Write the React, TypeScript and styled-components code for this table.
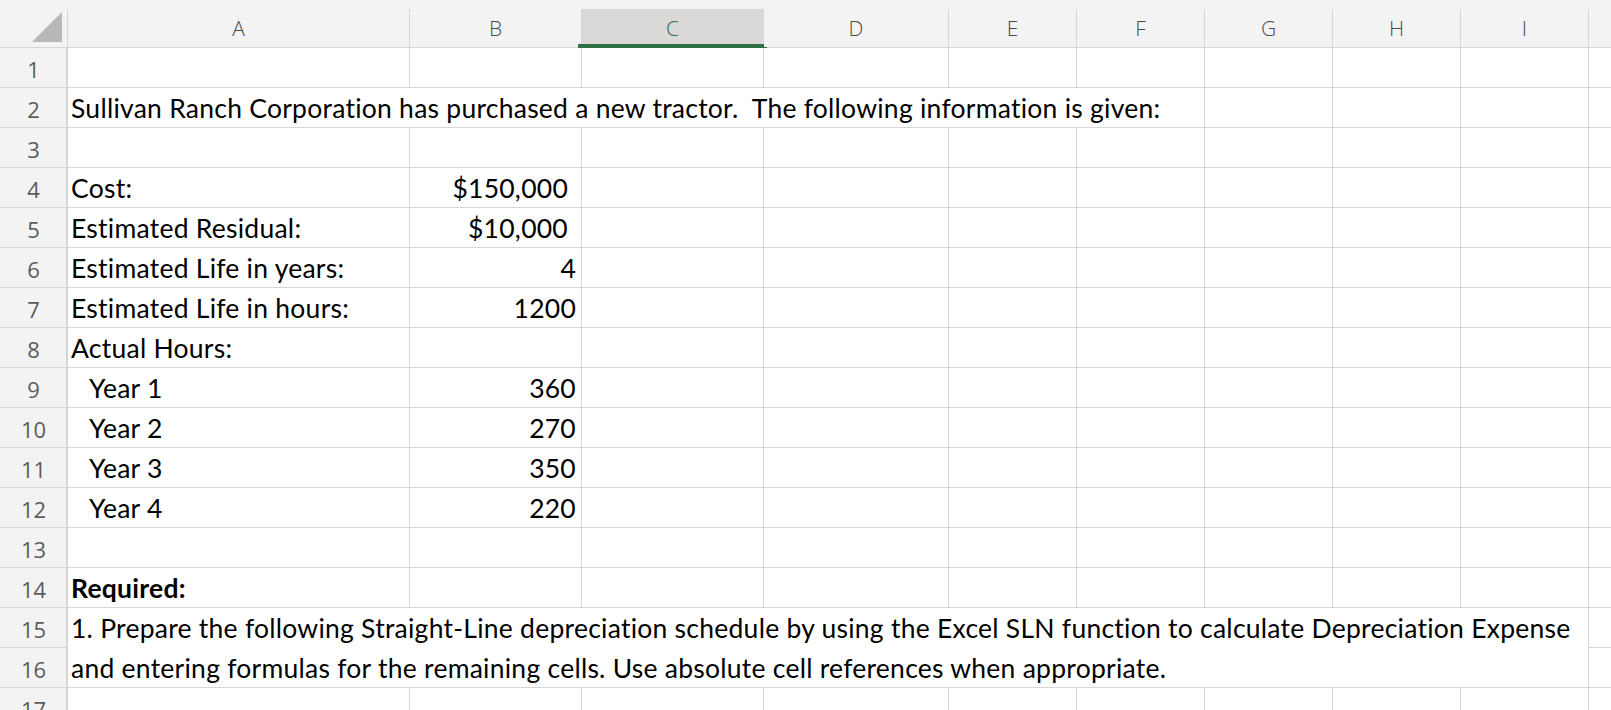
import styled, { createGlobalStyle, css } from 'styled-components'

const TRACKS = '67px 341px 171px 181px 184px 127px 127px 127px 127px 127px 1fr'
const LINE = '#d6d6d6'
const HEAD_BG = '#f3f3f3'
const LETTERS = ['A', 'B', 'C', 'D', 'E', 'F', 'G', 'H', 'I', '']
const SELECTED_COL = 'C'

type CellData = {
  text?: string
  lines?: string[]
  span?: number
  rowSpan?: number
  align?: 'left' | 'right'
  indent?: boolean
  bold?: boolean
  currency?: boolean
}

const label = (text: string, extra: Partial<CellData> = {}): CellData => ({ text, ...extra })
const num = (text: string, currency = false): CellData => ({ text, align: 'right', currency })

const rows: { n: number; cells: CellData[] }[] = [
  { n: 1, cells: [] },
  {
    n: 2,
    cells: [
      label('Sullivan Ranch Corporation has purchased a new tractor.  The following information is given:', {
        span: 6,
      }),
    ],
  },
  { n: 3, cells: [] },
  { n: 4, cells: [label('Cost:'), num('$150,000', true)] },
  { n: 5, cells: [label('Estimated Residual:'), num('$10,000', true)] },
  { n: 6, cells: [label('Estimated Life in years:'), num('4')] },
  { n: 7, cells: [label('Estimated Life in hours:'), num('1200')] },
  { n: 8, cells: [label('Actual Hours:')] },
  { n: 9, cells: [label('Year 1', { indent: true }), num('360')] },
  { n: 10, cells: [label('Year 2', { indent: true }), num('270')] },
  { n: 11, cells: [label('Year 3', { indent: true }), num('350')] },
  { n: 12, cells: [label('Year 4', { indent: true }), num('220')] },
  { n: 13, cells: [] },
  { n: 14, cells: [label('Required:', { bold: true })] },
  {
    n: 15,
    cells: [
      {
        lines: [
          '1. Prepare the following Straight-Line depreciation schedule by using the Excel SLN function to calculate Depreciation Expense',
          'and entering formulas for the remaining cells. Use absolute cell references when appropriate.',
        ],
        span: 9,
        rowSpan: 2,
      },
    ],
  },
  // row 16 is covered by the merged cell above, only column J is left
  { n: 16, cells: [] },
  { n: 17, cells: [] },
]

const GlobalStyle = createGlobalStyle`
  html, body {
    margin: 0;
    padding: 0;
    background: #fff;
    overflow: hidden;
  }
`

const Sheet = styled.div`
  width: 1611px;
  height: 710px;
  overflow: hidden;
  background: #fff;
  display: flex;
  flex-direction: column;
`

const HeaderRow = styled.div`
  flex-shrink: 0;
  display: grid;
  grid-template-columns: ${TRACKS};
  column-gap: 1px;
  height: 48px;
  box-sizing: border-box;
  border-bottom: 1px solid ${LINE};
  background: linear-gradient(to bottom, ${HEAD_BG} 9px, ${LINE} 9px);
`

const Corner = styled.div`
  background: ${HEAD_BG};
  display: flex;
  align-items: flex-end;
  justify-content: flex-end;
  padding: 0 5px 5px 0;
`

const Triangle = styled.div`
  width: 30px;
  height: 30px;
  background: #b8b8b8;
  clip-path: polygon(100% 0, 100% 100%, 0 100%);
`

const ColHeader = styled.div<{ $selected?: boolean }>`
  position: relative;
  background: ${HEAD_BG};
  font-family: 'Open Sans', sans-serif;
  font-weight: 300;
  font-size: 21px;
  color: #4a4a4a;
  display: flex;
  justify-content: center;
  align-items: center;
  padding-top: 9px;

  ${(p) =>
    p.$selected &&
    css`
      color: #2b6e45;
      background: linear-gradient(to bottom, ${HEAD_BG} 9px, #dad9d8 9px);

      &::after {
        content: '';
        position: absolute;
        left: -4px;
        right: -4px;
        bottom: -1px;
        height: 4px;
        background: #2e7044;
      }
    `}
`

const Body = styled.div`
  display: grid;
  grid-template-columns: ${TRACKS};
  grid-auto-rows: 39px;
  gap: 1px;
  background: ${LINE};
`

const RowHead = styled.div`
  background: ${HEAD_BG};
  box-shadow: inset -1px 0 ${LINE};
  font-family: 'Open Sans', sans-serif;
  font-size: 22px;
  color: #5c5c5c;
  text-align: center;
  line-height: 39px;
  padding-top: 2px;
  box-sizing: border-box;
`

const Cell = styled.div<{
  $span: number
  $rowSpan: number
  $align: 'left' | 'right'
  $indent?: boolean
  $bold?: boolean
  $currency?: boolean
}>`
  grid-column: span ${(p) => p.$span};
  grid-row: span ${(p) => p.$rowSpan};
  background: #fff;
  font-family: Lato, 'Liberation Sans', sans-serif;
  font-size: 26.5px;
  letter-spacing: 0.25px;
  font-weight: ${(p) => (p.$bold ? 700 : 400)};
  color: #000;
  line-height: 40px;
  white-space: pre;
  text-align: ${(p) => p.$align};
  padding-left: ${(p) => (p.$indent ? '21px' : '3px')};
  padding-right: ${(p) => (p.$currency ? '13px' : '5px')};
  box-sizing: border-box;
`

function renderRow(n: number, cells: CellData[]) {
  const out = [<RowHead key={`h${n}`}>{n}</RowHead>]
  let used = 0
  cells.forEach((c, i) => {
    used += c.span ?? 1
    out.push(
      <Cell
        key={`${n}-${i}`}
        $span={c.span ?? 1}
        $rowSpan={c.rowSpan ?? 1}
        $align={c.align ?? 'left'}
        $indent={c.indent}
        $bold={c.bold}
        $currency={c.currency}
      >
        {c.lines ? c.lines.map((l) => <div key={l}>{l}</div>) : c.text}
      </Cell>
    )
  })
  // merged block from row 15 takes A..I of row 16
  const free = n === 16 ? 1 : LETTERS.length - used
  for (let i = 0; i < free; i++) {
    out.push(<Cell key={`${n}-e${i}`} $span={1} $rowSpan={1} $align="left" />)
  }
  return out
}

export default function App() {
  return (
    <>
      <GlobalStyle />
      <Sheet>
        <HeaderRow>
          <Corner>
            <Triangle />
          </Corner>
          {LETTERS.map((l, i) => (
            <ColHeader key={i} $selected={l === SELECTED_COL}>
              {l}
            </ColHeader>
          ))}
        </HeaderRow>
        <Body>{rows.map((r) => renderRow(r.n, r.cells))}</Body>
      </Sheet>
    </>
  )
}
